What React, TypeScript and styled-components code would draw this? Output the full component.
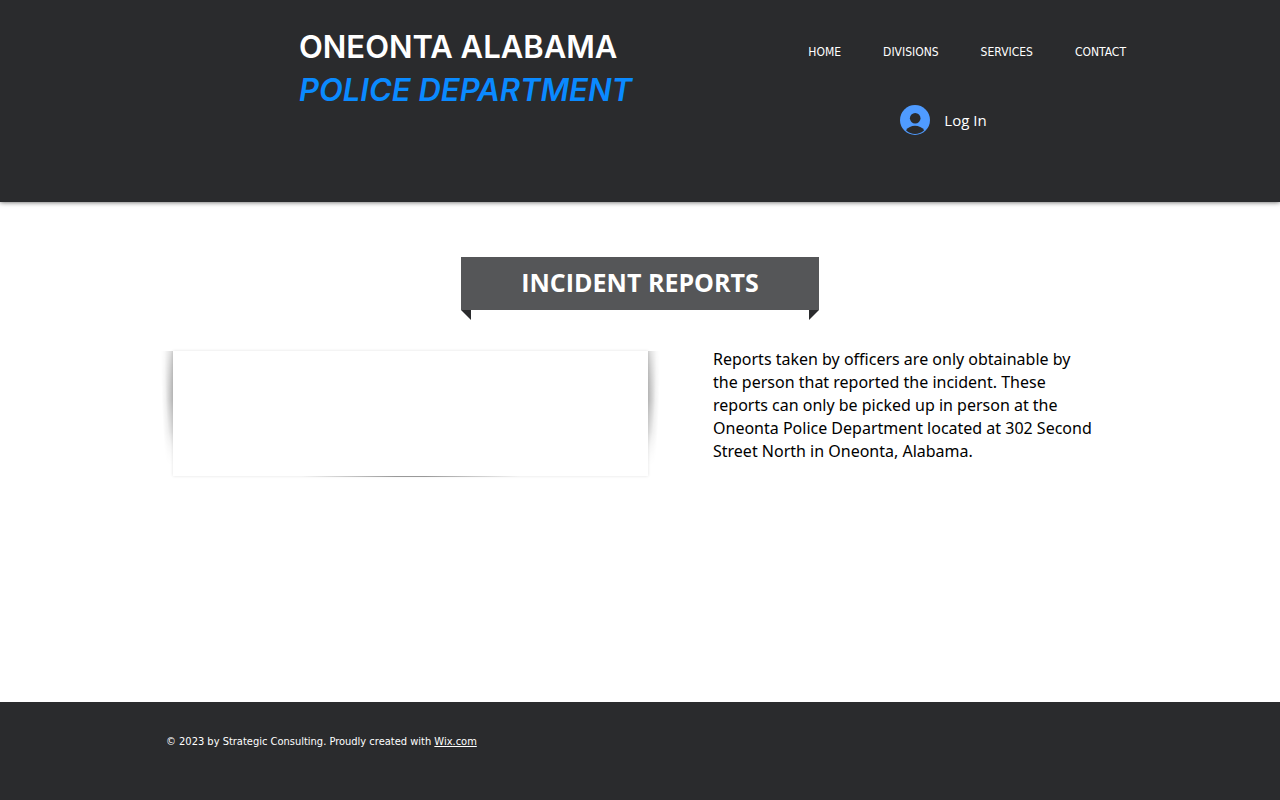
import React from "react";
import styled, { createGlobalStyle } from "styled-components";

const GlobalStyle = createGlobalStyle`
  *, *::before, *::after { box-sizing: border-box; }
  body {
    margin: 0;
    background: #fff;
    color: #000;
    font-family: "Open Sans", "Noto Sans", sans-serif;
  }
  h1, h2, p, ul { margin: 0; padding: 0; }
`;

const Page = styled.div`
  min-height: 100vh;
  display: flex;
  flex-direction: column;
`;

const Container = styled.div`
  width: 100%;
  max-width: 980px;
  margin: 0 auto;
`;

const Header = styled.header`
  background: #2a2b2d;
  box-shadow: 0 0 5px rgba(0, 0, 0, 0.7);
  padding: 25px 0 67px;
`;

const HeaderRow = styled(Container)`
  display: flex;
  justify-content: space-between;
`;

const Brand = styled.h1`
  padding-left: 149px;
  font: 600 31px/43px Inter, "Liberation Sans", sans-serif;
  color: #fff;
  white-space: nowrap;
`;

const BrandAccent = styled.span`
  display: block;
  font-style: italic;
  color: #0a8aff;
`;

const HeaderSide = styled.div`
  display: flex;
  flex-direction: column;
  align-items: flex-start;
  gap: 42px;
  padding: 16px 4px 0 0;
`;

const NavList = styled.ul`
  display: flex;
  gap: 42px;
  list-style: none;
`;

const NavLink = styled.a`
  display: block;
  color: #fff;
  text-decoration: none;
  font: 12px/22px Tahoma, "DejaVu Sans Condensed", sans-serif;
`;

const LoginButton = styled.button`
  display: flex;
  align-items: center;
  gap: 14px;
  margin-left: 92px;
  padding: 0;
  border: 0;
  background: none;
  color: #fff;
  font: 15px/30px "Open Sans", sans-serif;
  cursor: pointer;
`;

const Main = styled.main`
  flex: 1;
  padding-top: 55px;
`;

const Ribbon = styled.h2`
  position: relative;
  width: 358px;
  margin: 0 auto;
  padding-bottom: 2px;
  background: #555658;
  color: #fff;
  font-size: 25px;
  font-weight: 700;
  line-height: 51px;
  text-align: center;

  &::before,
  &::after {
    content: "";
    position: absolute;
    top: 100%;
    width: 10px;
    height: 10px;
    background: #2a2b2d;
  }
  &::before {
    left: 0;
    clip-path: polygon(0 0, 100% 0, 100% 100%);
  }
  &::after {
    right: 0;
    clip-path: polygon(0 0, 100% 0, 0 100%);
  }
`;

const Columns = styled(Container)`
  display: grid;
  grid-template-columns: 475px 383px;
  gap: 65px;
  padding: 38px 0 40px 23px;
`;

const Frame = styled.div`
  position: relative;
  height: 125px;
  margin-top: 3px;
  background: #fff;
  box-shadow: 0 0 3px rgba(0, 0, 0, 0.12);
`;

const SideShadow = styled.span<{ $side: "left" | "right" }>`
  position: absolute;
  top: 0;
  bottom: 0;
  ${(p) => p.$side}: -12px;
  width: 12px;
  background: radial-gradient(
    12px 140px at ${(p) => (p.$side === "left" ? "right" : "left")} top,
    rgba(0, 0, 0, 0.45),
    rgba(0, 0, 0, 0.22) 40%,
    rgba(0, 0, 0, 0.06) 70%,
    transparent
  );
  mask-image: linear-gradient(rgba(0, 0, 0, 0.35), #000 40%, #000 65%, transparent 92%);
`;

const BottomShadow = styled.span`
  position: absolute;
  top: 100%;
  left: 20%;
  right: 20%;
  height: 1px;
  background: linear-gradient(90deg, transparent 12%, #999 45%, #999 55%, transparent 88%);
`;

const Text = styled.p`
  font-family: "Noto Sans", "Open Sans", sans-serif;
  font-size: 16px;
  line-height: 23px;
`;

const Footer = styled.footer`
  background: #2a2b2d;
  color: #fff;
  padding: 31px 0 49px;
  font: 11px/18px Tahoma, "DejaVu Sans Condensed", sans-serif;
`;

const FooterText = styled.p`
  padding-left: 16px;
`;

const FooterLink = styled.a`
  color: inherit;
  text-decoration: underline;
`;

const navItems = ["HOME", "DIVISIONS", "SERVICES", "CONTACT"];

function AvatarIcon() {
  return (
    <svg width="30" height="30" viewBox="0 0 30 30" aria-hidden="true">
      <circle cx="15" cy="15" r="15" fill="#4f9bff" />
      <circle cx="15.2" cy="13.2" r="5.3" fill="#2a2b2d" />
      <path d="M6 25.3C8 22.2 11.3 20.7 15 20.7s7.2 1.5 9.2 4.6C21.5 27.9 18.4 29 15.1 29S8.6 27.9 6 25.3z" fill="#2a2b2d" />
    </svg>
  );
}

export default function App() {
  return (
    <Page>
      <GlobalStyle />
      <Header>
        <HeaderRow>
          <Brand>
            ONEONTA ALABAMA
            <BrandAccent>POLICE DEPARTMENT</BrandAccent>
          </Brand>
          <HeaderSide>
            <nav aria-label="Main">
              <NavList>
                {navItems.map((item) => (
                  <li key={item}>
                    <NavLink href={`#${item.toLowerCase()}`}>{item}</NavLink>
                  </li>
                ))}
              </NavList>
            </nav>
            <LoginButton type="button">
              <AvatarIcon />
              Log In
            </LoginButton>
          </HeaderSide>
        </HeaderRow>
      </Header>
      <Main>
        <Ribbon>INCIDENT REPORTS</Ribbon>
        <Columns>
          <Frame>
            <SideShadow $side="left" />
            <SideShadow $side="right" />
            <BottomShadow />
          </Frame>
          <Text>
            Reports taken by officers are only obtainable by the person that
            reported the incident. These reports can only be picked up in person
            at the Oneonta Police Department located at 302 Second Street North
            in Oneonta, Alabama.
          </Text>
        </Columns>
      </Main>
      <Footer>
        <Container>
          <FooterText>
            © 2023 by Strategic Consulting. Proudly created with{" "}
            <FooterLink href="#wix">Wix.com</FooterLink>
          </FooterText>
        </Container>
      </Footer>
    </Page>
  );
}
